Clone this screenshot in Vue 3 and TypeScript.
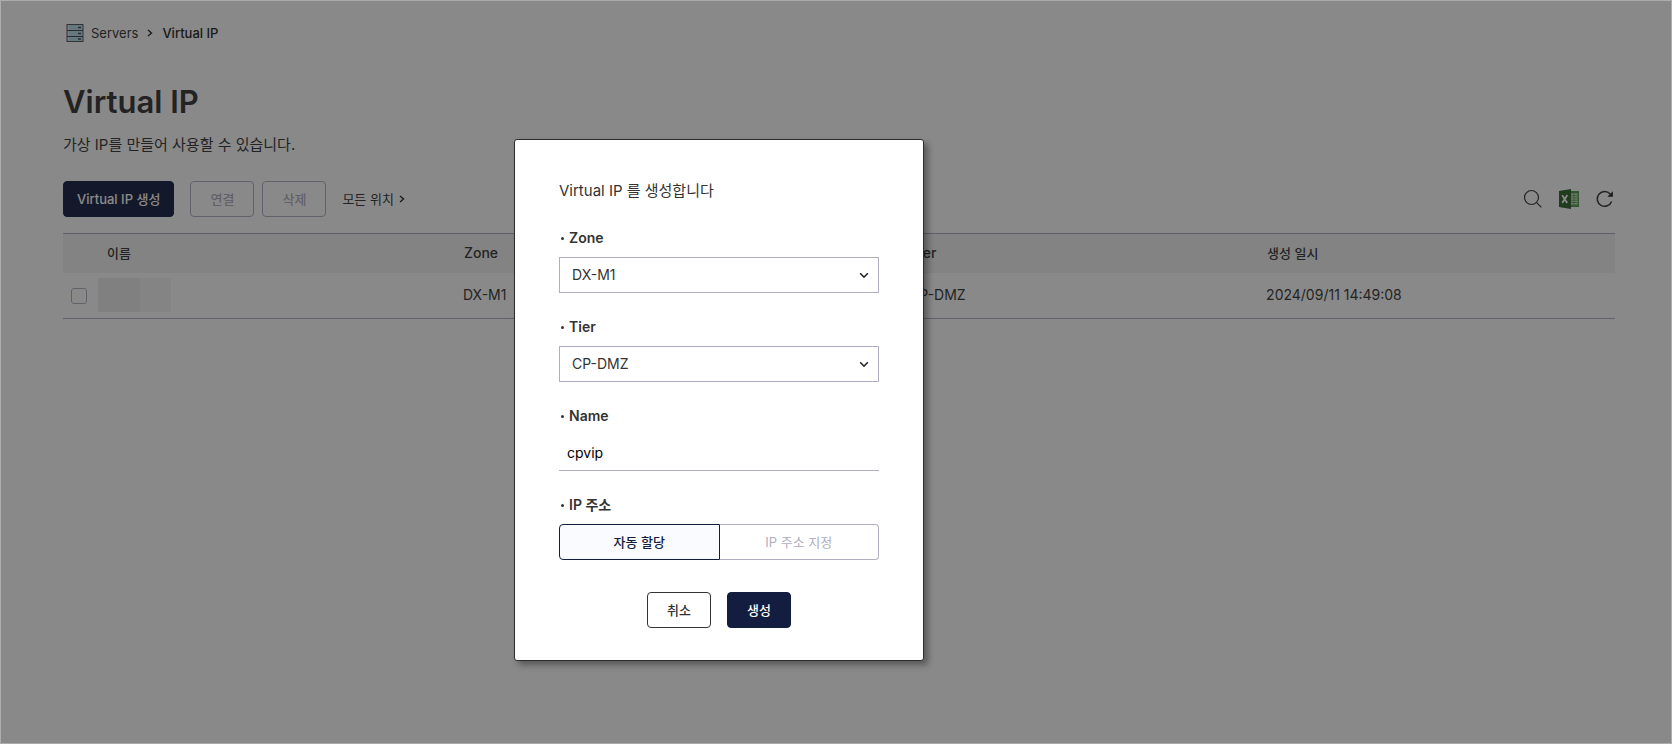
<script setup lang="ts">
import { ref } from 'vue'

interface Row {
  id: number
  zone: string
  tier: string
  createdAt: string
}

const rows: Row[] = [{ id: 1, zone: 'DX-M1', tier: 'CP-DMZ', createdAt: '2024/09/11 14:49:08' }]

const zone = ref('DX-M1')
const tier = ref('CP-DMZ')
const vipName = ref('cpvip')
const mode = ref<'auto' | 'manual'>('auto')
</script>

<template>
  <div class="screen">
    <main class="page">
      <nav class="crumbs">
        <svg class="server" viewBox="0 0 18 18" aria-hidden="true">
          <rect x="1" y="0.5" width="16" height="17" fill="#b4dcec" stroke="#55555a" />
          <path d="M2.5 1v16" stroke="#e4f3f8" />
          <path d="M1 6.5h16M1 12.5h16" stroke="#45454a" />
          <path d="M12 3.5h3M12 9.5h3M12 15h3" stroke="#45454a" stroke-width="1.4" />
        </svg>
        <a class="crumb" href="#">Servers</a>
        <svg class="sep" viewBox="0 0 6 8" aria-hidden="true"><path d="M1 1l3.5 3L1 7" /></svg>
        <span class="crumb current">Virtual IP</span>
      </nav>

      <h1>Virtual IP</h1>
      <p class="lead">가상 IP를 만들어 사용할 수 있습니다.</p>

      <div class="toolbar">
        <button class="btn primary" type="button">Virtual IP 생성</button>
        <div class="pair">
          <button class="btn muted" type="button" disabled>연결</button>
          <button class="btn muted" type="button" disabled>삭제</button>
        </div>
        <button class="place" type="button">
          모든 위치
          <svg class="small-sep" viewBox="0 0 6 8" aria-hidden="true"><path d="M1 1l3.5 3L1 7" /></svg>
        </button>
        <div class="tools">
          <button class="tool" type="button" aria-label="검색">
            <svg viewBox="0 0 20 20">
              <circle cx="8.5" cy="8.5" r="7" fill="none" stroke="#333" stroke-width="1.2" />
              <path d="M13.4 13.4l5 5" stroke="#333" stroke-width="1.2" />
            </svg>
          </button>
          <button class="tool" type="button" aria-label="엑셀">
            <svg viewBox="0 0 20 20">
              <path d="M11 2h9v16h-9z" fill="#4d9c45" />
              <path d="M12 4.5h6.5v11H12z" fill="#d5e6d2" />
              <path d="M12 6.6h6.5M12 8.9h6.5M12 11.2h6.5M12 13.5h6.5M15 4.5v11" stroke="#4d9c45" stroke-width="0.9" />
              <path d="M0 2l12-2v20L0 18z" fill="#2c6327" />
              <path d="M3.2 6.2l5 7.8M8.4 6l-5.2 8" stroke="#fff" stroke-width="1.8" />
            </svg>
          </button>
          <button class="tool" type="button" aria-label="새로고침">
            <svg viewBox="0 0 20 20">
              <path d="M15.2 5A7.4 7.4 0 1 0 16.6 12.4" fill="none" stroke="#333" stroke-width="1.5" />
              <path d="M17.9 2.2v5.6h-5.6z" fill="#222" />
            </svg>
          </button>
        </div>
      </div>

      <table>
        <colgroup>
          <col class="c-check" />
          <col class="c-name" />
          <col class="c-zone" />
          <col class="c-tier" />
          <col />
        </colgroup>
        <thead>
          <tr>
            <td class="corner"></td>
            <th scope="col" class="ko">이름</th>
            <th scope="col">Zone</th>
            <th scope="col">Tier</th>
            <th scope="col" class="ko">생성 일시</th>
          </tr>
        </thead>
        <tbody>
          <tr v-for="row in rows" :key="row.id">
            <td class="check"><input type="checkbox" aria-label="선택" /></td>
            <td class="name"><span class="mask"></span></td>
            <td>{{ row.zone }}</td>
            <td>{{ row.tier }}</td>
            <td>{{ row.createdAt }}</td>
          </tr>
        </tbody>
      </table>
    </main>

    <div class="overlay">
      <form class="dialog" role="dialog" aria-labelledby="dialog-title" @submit.prevent>
        <h2 id="dialog-title">Virtual IP 를 생성합니다</h2>

        <div class="field">
          <label for="zone">Zone</label>
          <div class="select">
            <select id="zone" v-model="zone"><option>DX-M1</option></select>
            <svg viewBox="0 0 10 7" aria-hidden="true"><path d="M1.2 1.2L5 5.2l3.8-4" /></svg>
          </div>
        </div>

        <div class="field">
          <label for="tier">Tier</label>
          <div class="select">
            <select id="tier" v-model="tier"><option>CP-DMZ</option></select>
            <svg viewBox="0 0 10 7" aria-hidden="true"><path d="M1.2 1.2L5 5.2l3.8-4" /></svg>
          </div>
        </div>

        <div class="field">
          <label for="vip-name">Name</label>
          <input id="vip-name" v-model="vipName" class="text" type="text" />
        </div>

        <div class="field">
          <span id="ip-label" class="label">IP 주소</span>
          <div class="segments" role="group" aria-labelledby="ip-label">
            <button type="button" :class="{ on: mode === 'auto' }" @click="mode = 'auto'">자동 할당</button>
            <button type="button" :class="{ on: mode === 'manual' }" @click="mode = 'manual'">IP 주소 지정</button>
          </div>
        </div>

        <div class="actions">
          <button class="btn outline" type="button">취소</button>
          <button class="btn primary" type="submit">생성</button>
        </div>
      </form>
    </div>
  </div>
</template>

<style>
body {
  background: #fff;
}
</style>

<style scoped>
.screen,
.screen * {
  box-sizing: border-box;
}

.screen {
  position: relative;
  min-height: 100vh;
  color: #333;
  font-family: Inter, "Noto Sans CJK KR", sans-serif;
  font-size: 14px;
  line-height: 20px;
}

button,
input,
select {
  margin: 0;
  font: inherit;
  color: inherit;
}

button {
  font-size: 13px;
}

.page {
  padding: 23px 57px 0 63px;
}

.crumbs {
  display: flex;
  align-items: center;
  height: 20px;
  padding-left: 3px;
}

.server {
  width: 18px;
  height: 18px;
  margin-right: 7px;
}

.crumb {
  color: #333;
  font-size: 13px;
  text-decoration: none;
}

.current {
  color: #222;
  font-weight: 500;
}

.sep,
.small-sep {
  width: 6px;
  height: 8px;
  fill: none;
  stroke: #222;
  stroke-width: 1.4;
}

.sep {
  margin: 0 9px;
}

h1 {
  margin: 39px 0 0;
  font-size: 31px;
  line-height: 40px;
  font-weight: 600;
}

.lead {
  margin: 11px 0 0;
  font-size: 15px;
  line-height: 24px;
  font-weight: 400;
}

.toolbar {
  display: flex;
  align-items: center;
  gap: 16px;
  margin-top: 24px;
}

.pair {
  display: flex;
  gap: 8px;
}

.btn {
  min-width: 64px;
  height: 36px;
  padding: 0 13px;
  border: 1px solid #131d40;
  border-radius: 4px;
  font-weight: 500;
  white-space: nowrap;
}

.primary {
  background: #131d40;
  color: #fff;
}

.muted {
  border-color: #b1aec1;
  background: transparent;
  color: #b1aec1;
}

.outline {
  border-color: #333;
  background: #fff;
}

.place {
  display: flex;
  align-items: center;
  gap: 5px;
  padding: 0;
  border: 0;
  background: none;
}

.tools {
  display: flex;
  gap: 16px;
  margin-left: auto;
}

.tool {
  width: 20px;
  height: 20px;
  padding: 0;
  border: 0;
  background: none;
}

.tool svg {
  display: block;
  width: 20px;
  height: 20px;
}

table {
  width: 100%;
  margin-top: 16px;
  border-collapse: separate;
  border-spacing: 0;
  border-top: 1px solid #b1aec1;
  border-bottom: 1px solid #b1aec1;
  table-layout: fixed;
}

.c-check {
  width: 32px;
}

.c-name,
.c-tier {
  width: 23%;
}

.c-zone {
  width: 28.75%;
}

th,
td.corner {
  height: 39px;
  padding: 0 12px 1px;
  background: #f3f3f3;
  font-weight: 500;
  text-align: left;
}

th.ko {
  font-size: 13px;
}

td {
  height: 45px;
  padding: 0 11px 1px;
}

td.check {
  padding: 0 0 0 8px;
}

.check input {
  display: block;
  appearance: none;
  width: 16px;
  height: 16px;
  border: 1px solid #b1aec1;
  border-radius: 3px;
}

td.name {
  padding: 0 3px 1px;
}

.mask {
  display: block;
  width: 73px;
  height: 34px;
  background: linear-gradient(90deg, #ececec 42px, #f5f5f5 42px);
}

.overlay {
  position: absolute;
  inset: 0;
  padding: 138px 0 0 513px;
  border: 1px solid #adadad;
  background: rgba(20, 20, 20, 0.5);
}

.dialog {
  width: 410px;
  padding: 40px 44px 32px;
  border: 1px solid #2c2c2c;
  border-radius: 3px;
  background: #fff;
  box-shadow: 4px 4px 6px rgba(0, 0, 0, 0.35);
}

h2 {
  margin: 0 0 26px;
  font-size: 15px;
  line-height: 22px;
  font-weight: 400;
}

.field {
  display: grid;
  gap: 9px;
  margin-top: 24px;
}

label,
.label {
  display: flex;
  align-items: center;
  gap: 5px;
  height: 20px;
  padding-left: 2px;
  font-weight: 600;
}

label::before,
.label::before {
  width: 3px;
  height: 3px;
  border-radius: 50%;
  background: #333;
  content: "";
}

.select {
  display: grid;
  align-items: center;
}

.select > * {
  grid-area: 1 / 1;
}

select {
  appearance: none;
  width: 100%;
  height: 36px;
  padding: 0 32px 0 12px;
  border: 1px solid #b1aec1;
  border-radius: 0;
  background: #fff;
}

.select svg {
  justify-self: end;
  width: 10px;
  height: 7px;
  margin-right: 10px;
  fill: none;
  stroke: #222;
  stroke-width: 1.6;
  pointer-events: none;
}

.text {
  width: 100%;
  height: 36px;
  padding: 0 8px;
  border: 0;
  border-bottom: 1px solid #b1aec1;
  background: none;
  color: #000;
  outline: 0;
}

.segments {
  display: flex;
}

.segments button {
  flex: 1;
  height: 36px;
  padding: 0;
  border: 1px solid #b1aec1;
  background: #fff;
  color: #b1aec1;
}

.segments button:first-child {
  border-radius: 4px 0 0 4px;
}

.segments button:last-child {
  border-left: 0;
  border-radius: 0 4px 4px 0;
}

.segments .on {
  border-color: #131d40;
  background: #fafbff;
  color: #131d40;
  font-weight: 500;
}

.actions {
  display: flex;
  justify-content: center;
  gap: 16px;
  margin-top: 32px;
}
</style>
